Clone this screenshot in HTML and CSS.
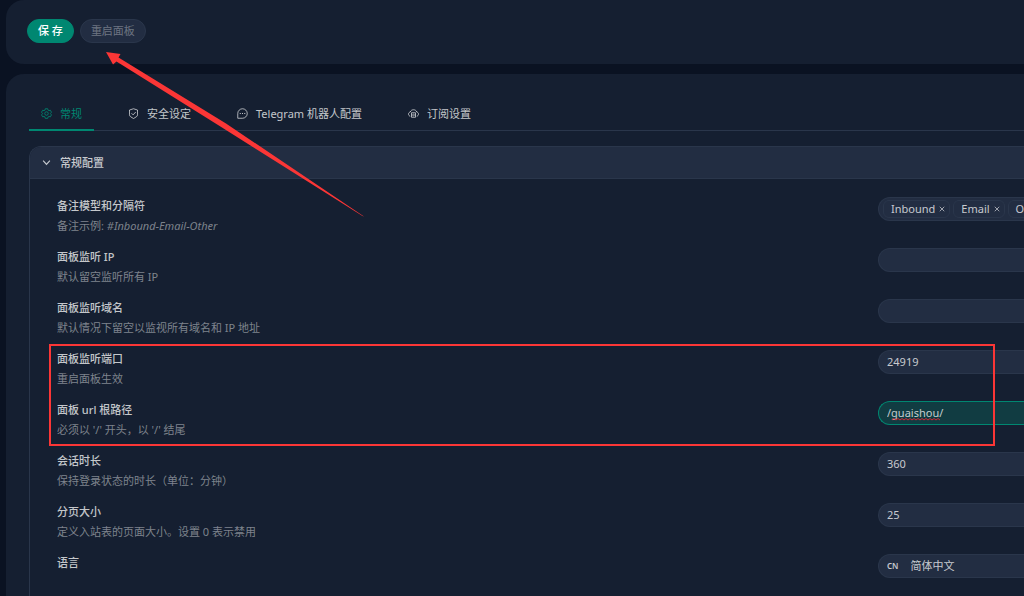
FILE: index.html
```
<!DOCTYPE html>
<html lang="zh-CN">
<head>
    <meta charset="UTF-8">
    <meta name="viewport" content="width=device-width, initial-scale=1.0">
    <title>面板设置</title>
    <link rel="stylesheet" href="styles.css">
</head>
<body>
    <main class="page">
        <!-- 操作按钮 -->
        <section class="card actions">
            <button type="button" class="btn btn-primary">保 存</button>
            <button type="button" class="btn" disabled>重启面板</button>
        </section>

        <section class="card settings">
            <!-- 标签页 -->
            <nav class="tabs">
                <button type="button" class="tab active">
                    <svg class="icon" viewBox="0 0 22 22"><path d="M8.6 1.5h4.8l.7 2.8 1.8 1 2.8-.8 2.3 4-2 2v1.200l2 2-2.300 4-2.800-.8-1.800 1-.7 2.800H8.600l-.7-2.800-1.800-1-2.800.8-2.300-4 2-2v-1.200l-2-2 2.300-4 2.800.8 1.800-1z"/><circle cx="11" cy="11" r="3.500"/></svg>
                    <span>常规</span>
                </button>
                <button type="button" class="tab">
                    <svg class="icon" viewBox="0 0 22 22"><path d="M11 1.500L19 4v9.500c0 2-.8 3-2.300 4.100L11 21l-5.700-3.400C3.800 16.500 3 15.500 3 13.500V4z"/><path d="M7 10.500l3.200 3.200L15.500 8"/></svg>
                    <span>安全设定</span>
                </button>
                <button type="button" class="tab">
                    <svg class="icon" viewBox="0 0 22 22"><path d="M1.500 20.500V11A9.500 9.500 0 1 1 11 20.500z"/><path class="dots" d="M5.500 11h2M10 11h2M14.500 11h2"/></svg>
                    <span>Telegram 机器人配置</span>
                </button>
                <button type="button" class="tab">
                    <svg class="icon" viewBox="0 0 22 22"><path d="M4.500 16.500C2.500 16 1 14.500 1 12.200c0-2.200 1.500-3.700 3.500-4.200C5.500 5 8 3.500 11 3.500S16.500 5 17.500 8c2 .5 3.500 2 3.500 4.200 0 2.300-1.500 3.800-3.500 4.300"/><path d="M7 9.500h8v9H7zM7 14h8M10 11.800h1M10 16.200h1"/></svg>
                    <span>订阅设置</span>
                </button>
            </nav>

            <details class="panel" open>
                <summary class="panel-header">
                    <svg class="chevron" viewBox="0 0 16 16"><path d="M2 4.500l6 7 6-7"/></svg>
                    <span>常规配置</span>
                </summary>
                <div class="panel-body">
                    <div class="row">
                        <div class="info">
                            <h2>备注模型和分隔符</h2>
                            <p>备注示例: <i>#Inbound-Email-Other</i></p>
                        </div>
                        <div class="field tags">
                            <span class="tag">Inbound <button type="button" class="remove" aria-label="移除 Inbound"><svg viewBox="0 0 8 8"><path d="M1 1l6 6M7 1L1 7"/></svg></button></span>
                            <span class="tag">Email <button type="button" class="remove" aria-label="移除 Email"><svg viewBox="0 0 8 8"><path d="M1 1l6 6M7 1L1 7"/></svg></button></span>
                            <span class="tag">Other <button type="button" class="remove" aria-label="移除 Other"><svg viewBox="0 0 8 8"><path d="M1 1l6 6M7 1L1 7"/></svg></button></span>
                        </div>
                    </div>
                    <div class="row">
                        <div class="info">
                            <h2><label for="listen-ip">面板监听 IP</label></h2>
                            <p>默认留空监听所有 IP</p>
                        </div>
                        <input type="text" id="listen-ip" class="field">
                    </div>
                    <div class="row">
                        <div class="info">
                            <h2><label for="listen-domain">面板监听域名</label></h2>
                            <p>默认情况下留空以监视所有域名和 IP 地址</p>
                        </div>
                        <input type="text" id="listen-domain" class="field">
                    </div>
                    <!-- 红框标出的两项 -->
                    <div class="marked">
                        <div class="row">
                            <div class="info">
                                <h2><label for="port">面板监听端口</label></h2>
                                <p>重启面板生效</p>
                            </div>
                            <input type="text" id="port" class="field" value="24919">
                        </div>
                        <div class="row">
                            <div class="info">
                                <h2><label for="base-path">面板 url 根路径</label></h2>
                                <p>必须以 '/' 开头，以 '/' 结尾</p>
                            </div>
                            <div class="spell">
                                <input type="text" id="base-path" class="field focused" value="/guaishou/" spellcheck="false">
                                <svg class="wave" viewBox="0 0 48 3"><path d="M0 2l2-1.500 2 1.500 2-1.500 2 1.500 2-1.500 2 1.500 2-1.500 2 1.500 2-1.500 2 1.500 2-1.500 2 1.500 2-1.500 2 1.500 2-1.500 2 1.500 2-1.500 2 1.500 2-1.500 2 1.500 2-1.500 2 1.500 2-1.500 2 1.500"/></svg>
                            </div>
                        </div>
                    </div>
                    <div class="row">
                        <div class="info">
                            <h2><label for="session">会话时长</label></h2>
                            <p>保持登录状态的时长（单位：分钟）</p>
                        </div>
                        <input type="text" id="session" class="field" value="360">
                    </div>
                    <div class="row">
                        <div class="info">
                            <h2><label for="page-size">分页大小</label></h2>
                            <p>定义入站表的页面大小。设置 0 表示禁用</p>
                        </div>
                        <input type="text" id="page-size" class="field" value="25">
                    </div>
                    <div class="row">
                        <div class="info">
                            <h2><label for="lang">语言</label></h2>
                        </div>
                        <div class="field language">
                            <span class="code">CN</span>
                            <select id="lang">
                                <option selected>简体中文</option>
                            </select>
                        </div>
                    </div>
                </div>
            </details>
        </section>
    </main>

    <!-- 指向重启按钮的箭头 -->
    <svg class="arrow" viewBox="0 0 258 166"><path d="M0 0L14.500 2 12.500 5.500 120 71.500 258 164.500 256.500 164 116 75.500 10.500 9.500 7 12.500z"/></svg>
</body>
</html>
```

FILE: styles.css
```
* {
    box-sizing: border-box;
}
body {
    margin: 0;
    min-height: 100vh;
    background-color: #0a1222;
    color: rgba(255, 255, 255, 0.75);
    font-family: "Noto Sans", "Noto Sans CJK SC", sans-serif;
    font-size: 11px;
    line-height: 20px;
    position: relative;
    overflow: hidden;
}
button, input, select {
    font: inherit;
    color: inherit;
}
svg {
    fill: none;
    stroke: currentColor;
}
.page {
    height: 100vh;
    display: flex;
    flex-direction: column;
    gap: 10px;
    padding-left: 6px;
}
.card {
    background-color: #151f31;
    border-radius: 18px 0 0 18px;
}
.actions {
    display: flex;
    gap: 6px;
    padding: 19px 21px 21px;
}
.btn {
    height: 24px;
    padding: 0 10px;
    border: 1px solid #2a364b;
    border-radius: 12px;
    background-color: #222d42;
    line-height: 20px;
    white-space: nowrap;
}
.btn:disabled {
    color: rgba(255, 255, 255, 0.35);
}
.btn-primary {
    border-color: #008771;
    background-color: #008771;
    color: white;
    font-weight: 500;
}
.settings {
    flex: 1;
    padding: 24px 0 0 23px;
    border-radius: 18px 0 0 0;
}
.tabs {
    display: flex;
    gap: 22px;
    border-bottom: 1px solid #2a364b;
}
.tab {
    display: flex;
    align-items: center;
    gap: 8px;
    height: 33px;
    margin-bottom: -1px;
    padding: 0 12px;
    border: none;
    border-bottom: 2px solid transparent;
    background: none;
    color: rgba(255, 255, 255, 0.75);
    white-space: nowrap;
    cursor: pointer;
}
.tab.active {
    color: #008771;
    border-bottom-color: #008771;
}
.icon {
    width: 11px;
    height: 11px;
    stroke-width: 1.7;
}
.icon .dots {
    stroke-width: 2;
}
.panel {
    margin-top: 15px;
    border: 1px solid #2a364b;
    border-width: 1px 0 0 1px;
    border-radius: 12px 0 0 0;
    overflow: hidden;
}
.panel-header {
    display: flex;
    align-items: center;
    gap: 9px;
    height: 32px;
    padding: 0 12px;
    background-color: #222d42;
    border-bottom: 1px solid #2a364b;
    font-weight: 500;
    cursor: pointer;
}
.chevron {
    width: 9px;
    height: 9px;
    stroke-width: 2;
}
.panel-body {
    padding: 11px 0 0 27px;
}
.row {
    display: grid;
    grid-template-columns: minmax(0, 1fr) 146px;
    align-items: start;
    height: 51px;
    padding-top: 6px;
}
.info h2, .info p {
    margin: 0;
    font-size: 11px;
    font-weight: 500;
    line-height: 20px;
}
.info p {
    font-weight: 400;
    line-height: 19px;
    color: rgba(255, 255, 255, 0.45);
}
.field {
    width: 100%;
    height: 24px;
    margin-top: 1px;
    padding: 0 8px 2px;
    border: 1px solid #2a364b;
    border-right: none;
    border-radius: 12px 0 0 12px;
    background-color: #222d42;
    outline: none;
}
.field.focused {
    border-color: #008771;
    background-color: #113c42;
}
.tags {
    display: flex;
    align-items: center;
    gap: 3px;
    padding: 0 4px;
    overflow: hidden;
}
.tag {
    display: flex;
    flex-shrink: 0;
    align-items: center;
    gap: 4px;
    height: 18px;
    padding: 0 4px 0 7px;
    border: 1px solid #2a364b;
    border-radius: 6px;
}
.remove {
    display: flex;
    padding: 0;
    border: none;
    background: none;
}
.remove svg {
    width: 6px;
    height: 6px;
}
.spell {
    position: relative;
    display: flex;
}
.wave {
    position: absolute;
    left: 14px;
    top: 18px;
    width: 48px;
    height: 3px;
    stroke: #d02a35;
}
.language {
    display: flex;
    align-items: center;
    gap: 12px;
    padding-bottom: 0;
}
.language .code {
    font-size: 8px;
    font-weight: 600;
}
.language select {
    flex: 1;
    padding: 0;
    border: none;
    background: none;
    appearance: none;
    outline: none;
}
.marked {
    position: relative;
}
.marked::after {
    content: "";
    position: absolute;
    inset: 1px 29px -1px -8px;
    border: 2px solid #fb3636;
    pointer-events: none;
}
.arrow {
    position: absolute;
    left: 106px;
    top: 52px;
    width: 258px;
    height: 166px;
    fill: #fb3636;
    stroke: none;
    pointer-events: none;
}
```
